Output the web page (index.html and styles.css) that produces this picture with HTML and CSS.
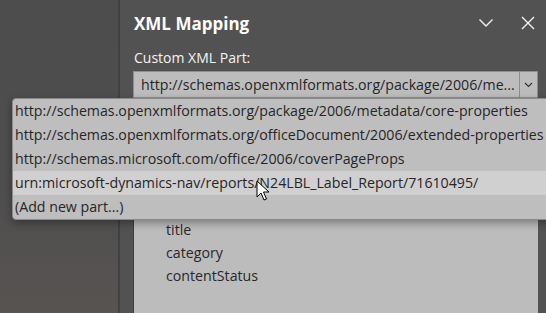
FILE: index.html
```html
<!DOCTYPE html>
<html lang="en">
<head>
  <meta charset="UTF-8" />
  <title>XML Mapping</title>
  <link rel="stylesheet" href="styles.css">
</head>
<body>
  <div class="app">
    <div class="side"></div>
    <div class="pane">
      <div class="head">
        <h1>XML Mapping</h1>
        <div class="tools">
          <svg width="16" height="10" viewBox="0 0 16 10"><path d="M1.5 1.5 L8 8 L14.5 1.5" fill="none" stroke="#f2f2f2" stroke-width="1.4"/></svg>
          <svg width="14" height="14" viewBox="0 0 14 14"><path d="M1 1 L13 13 M13 1 L1 13" fill="none" stroke="#f2f2f2" stroke-width="1.4"/></svg>
        </div>
      </div>
      <div class="label">Custom XML Part:</div>
      <div class="combo">
        <span class="value">http://schemas.openxmlformats.org/package/2006/me...</span>
        <span class="arrow"><svg width="9" height="6" viewBox="0 0 9 6"><path d="M1 1 L4.5 4.5 L8 1" fill="none" stroke="#333" stroke-width="1.2"/></svg></span>
      </div>
      <div class="tree">
        <div class="node">title</div>
        <div class="node">category</div>
        <div class="node">contentStatus</div>
      </div>
    </div>
  </div>

  <ul class="popup">
    <li>http://schemas.openxmlformats.org/package/2006/metadata/core-properties</li>
    <li>http://schemas.openxmlformats.org/officeDocument/2006/extended-properties</li>
    <li>http://schemas.microsoft.com/office/2006/coverPageProps</li>
    <li class="hover">urn:microsoft-dynamics-nav/reports/N24LBL_Label_Report/71610495/</li>
    <li>(Add new part...)</li>
  </ul>

  <svg class="cursor" width="14" height="22" viewBox="0 0 14 22"><path d="M1 1 L1 17 L5 13 L8 20 L10.5 19 L7.5 12 L13 12 Z" fill="#fff" stroke="#000" stroke-width="1" stroke-linejoin="round"/></svg>
</body>
</html>
```

FILE: styles.css
```css
* { box-sizing: border-box; margin: 0; padding: 0; }
html, body { height: 100%; overflow: hidden; font-family: 'Open Sans', 'Noto Sans', sans-serif; background: #4e4e4e; }

.app { display: flex; height: 100%; }
.side { width: 120px; background: linear-gradient(180deg, #4d4d4d 0%, #4f4e4e 60%, #575452 100%); border-right: 2px solid #414141; }
.pane { flex: 1; background: #525252; display: flex; flex-direction: column; padding: 0 8px 0 13px; }

.head { display: flex; align-items: center; justify-content: space-between; height: 46px; padding-left: 1px; }
h1 { font-size: 17px; font-weight: 700; color: #fff; }
.tools { display: flex; align-items: center; gap: 27px; padding-right: 3px; }

.label { font-size: 14px; color: #f4f4f4; height: 24px; line-height: 24px; padding-left: 1px; }

.combo { display: flex; height: 27px; background: #bdbdbd; border: 1px solid #8e8e8e; margin-top: 1px; }
.combo .value { flex: 1; font-size: 14.2px; color: #262626; line-height: 25px; padding-left: 7px; white-space: nowrap; overflow: hidden; }
.combo .arrow { width: 18px; border-left: 1px solid #8e8e8e; display: flex; align-items: center; justify-content: center; }

.tree { flex: 1; margin-top: 4px; background: #bcbcbc; border-left: 1px solid #3c3c3c; padding: 116px 0 0 32px; }
.node { font-size: 14.2px; color: #282828; height: 23px; line-height: 23px; }

.popup { position: absolute; left: 12px; top: 98px; width: 560px; list-style: none; background: #bebebe; border: 1px solid #8a8a8a; border-radius: 4px; box-shadow: 0 3px 8px rgba(0,0,0,0.35); overflow: hidden; }
.popup li { height: 24px; line-height: 24px; font-size: 14.2px; color: #262626; padding-left: 2px; white-space: nowrap; }
.popup li.hover { background: #d0d0d0; }

.cursor { position: absolute; left: 256px; top: 180px; }
```
